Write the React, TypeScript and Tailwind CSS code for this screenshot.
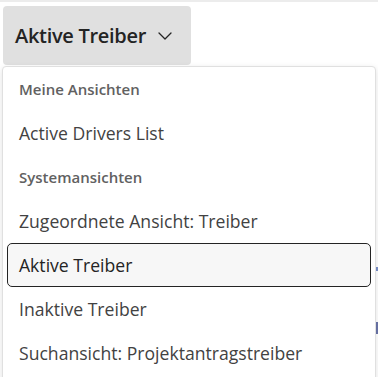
import React from "react";

const font = { fontFamily: '"Open Sans", "Noto Sans", sans-serif' };

function Header({ label }: { label: string }) {
  return (
    <div className="h-[44px] flex items-center pl-[16px] text-[15px] font-semibold text-[#616161]">
      {label}
    </div>
  );
}

function Item({ label, selected }: { label: string; selected?: boolean }) {
  return (
    <div className="h-[44px] px-[4px] flex items-stretch">
      <div
        className={
          selected
            ? "flex-1 flex items-center text-[17.6px] text-[#242424] bg-[#f7f7f7] border border-[#242424] rounded-[5px] pl-[11px]"
            : "flex-1 flex items-center pl-[12px] text-[17.6px] text-[#424242]"
        }
      >
        {label}
      </div>
    </div>
  );
}

export default function App() {
  return (
    <div
      className="relative w-[378px] h-[377px] bg-white overflow-hidden border-t-2 border-[#ececec]"
      style={font}
    >
      <div className="ml-[3px] mt-[4px] w-[188px] h-[59px] bg-[#e0e0e0] rounded-[4px] flex items-center pl-[12px] gap-[12px] text-[20px] font-semibold tracking-[-0.3px] text-[#242424]">
        <span>Aktive Treiber</span>
        <svg width="14" height="8" viewBox="0 0 14 8" fill="none" className="mt-[1px]">
          <path d="M1 1 L7 7 L13 1" stroke="#242424" strokeWidth="1.3" strokeLinecap="round" strokeLinejoin="round" />
        </svg>
      </div>

      <div className="absolute right-0 top-[265px] w-[2px] h-[4px] bg-[#7a8fc8]" />
      <div className="absolute right-0 top-[320px] w-[2px] h-[12px] bg-[#6a74a8]" />

      <div className="absolute left-[2px] top-[64px] w-[374px] h-[320px] bg-white border border-[#e0e0e0] rounded-[4px] shadow-[0_2px_6px_rgba(0,0,0,0.12)]">
        <Header label="Meine Ansichten" />
        <Item label="Active Drivers List" />
        <Header label="Systemansichten" />
        <Item label="Zugeordnete Ansicht: Treiber" />
        <Item label="Aktive Treiber" selected />
        <Item label="Inaktive Treiber" />
        <Item label="Suchansicht: Projektantragstreiber" />
      </div>
    </div>
  );
}
